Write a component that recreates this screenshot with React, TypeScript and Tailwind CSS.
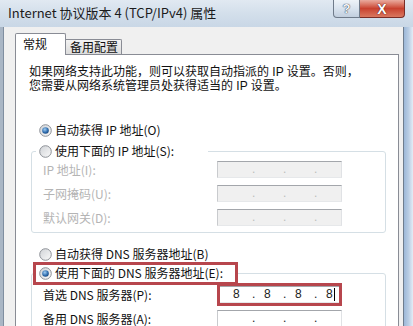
import React from 'react';

const cjk = "font-['Noto_Sans_CJK_SC','Noto_Sans',sans-serif]";

const Radio = ({ checked }: { checked?: boolean }) => (
  <svg width="13" height="13" viewBox="0 0 13 13" className="shrink-0">
    <defs>
      <linearGradient id="radioFill" x1="0" y1="0" x2="1" y2="1">
        <stop offset="0" stopColor="#cfd2d6" />
        <stop offset="1" stopColor="#fbfbfb" />
      </linearGradient>
      <radialGradient id="radioDot" cx="0.4" cy="0.35" r="0.75">
        <stop offset="0" stopColor="#9fcdf3" />
        <stop offset="0.6" stopColor="#2f6cad" />
        <stop offset="1" stopColor="#173f70" />
      </radialGradient>
    </defs>
    <circle cx="6.5" cy="6.5" r="5.8" fill="url(#radioFill)" stroke="#8d9197" strokeWidth="1" />
    {checked && <circle cx="6.5" cy="6.5" r="3.3" fill="url(#radioDot)" />}
  </svg>
);

const RadioRow = ({ checked, label }: { checked?: boolean; label: string }) => (
  <div className="flex h-[16px] items-center gap-[3px] text-[12px] leading-[16px] text-[#111]">
    <Radio checked={checked} />
    <span className="whitespace-nowrap">{label}</span>
  </div>
);

interface IpFieldProps {
  value?: string[];
  disabled?: boolean;
  cursor?: boolean;
}

const IpField = ({ value, disabled, cursor }: IpFieldProps) => (
  <div
    className={`flex h-[17px] w-[125px] shrink-0 items-center overflow-hidden border border-t-[#a3a6ab] border-l-[#c9cbce] border-r-[#e0e2e5] border-b-[#e6e8ea] pl-[15px] font-['Liberation_Sans',sans-serif] text-[12px] leading-[15px] ${
      disabled ? 'bg-[#f0f0f0] text-[#bcbcbc]' : 'bg-white text-[#222]'
    }`}
  >
    {[0, 1, 2, 3].map((i) => (
      <div key={i} className={`flex shrink-0 ${i < 3 ? 'w-[31px]' : ''}`}>
        <span className={i < 3 ? 'w-[19px]' : ''}>{value?.[i] ?? ''}</span>
        {i < 3 && <span>.</span>}
        {i === 3 && cursor && <span className="ml-[1px] mt-[1px] h-[13px] w-px bg-black" />}
      </div>
    ))}
  </div>
);

const FieldRow = ({ label, disabled, children }: { label: string; disabled?: boolean; children: React.ReactNode }) => (
  <div className="flex items-center">
    <span
      className={`w-[174px] whitespace-nowrap text-[12px] leading-[16px] ${disabled ? 'text-[#b4b4b4]' : 'text-[#111]'}`}
    >
      {label}
    </span>
    {children}
  </div>
);

const RedFrame = ({ className }: { className: string }) => (
  <span className={`pointer-events-none absolute border-[3px] border-[#b7464d] ${className}`} />
);

export default function App() {
  return (
    <div className={`flex h-[326px] w-[413px] flex-col overflow-hidden bg-[#c4d3e3] ${cjk}`}>
      {/* title bar */}
      <div className="flex h-[27px] shrink-0 items-start justify-between bg-gradient-to-b from-[#e1e9f2] via-[#d3dfeb] to-[#c9d7e6]">
        <div className="whitespace-nowrap pl-[8px] pt-[4px] text-[13px] leading-[18px] text-[#1b1b1b]">
          Internet 协议版本 4 (TCP/IPv4) 属性
        </div>
        <div className="mr-[8px] flex">
          <div className="flex h-[18px] w-[27px] items-center justify-center rounded-bl-[4px] border border-t-0 border-[#6f7b8a] bg-gradient-to-b from-[#eef3f8] via-[#d9e3ee] to-[#c2cfde] font-['Liberation_Sans',sans-serif] text-[13px] font-bold leading-none text-[#f4f6f9] [text-shadow:0_0_1px_#2f3a48,0_0_1px_#2f3a48]">
            ?
          </div>
          <div className="flex h-[18px] w-[45px] items-center justify-center rounded-br-[4px] border border-l-0 border-t-0 border-[#7a2d26] bg-gradient-to-b from-[#e9aa9e] via-[#c8412f] to-[#d9775f] font-['Liberation_Sans',sans-serif] text-[14px] font-bold leading-none text-white [text-shadow:0_0_1px_#5a1a14,0_0_1px_#5a1a14]">
            X
          </div>
        </div>
      </div>

      <div className="flex flex-1">
        <div className="w-[4px] border-r border-[#7f8ea0] bg-[#a9b6c5]" />

        <div className="flex flex-1 flex-col bg-[#f0f0f0] pl-[11px] pr-[4px] pt-[6px]">
          {/* tabs */}
          <div className="relative z-10 -mb-px flex items-end">
            <div className="h-[22px] w-[51px] rounded-t-[2px] border border-b-0 border-[#898c95] bg-white pl-[7px] pt-[2px] text-[12px] leading-[16px] text-[#111]">
              常规
            </div>
            <div className="mb-px h-[15px] w-[56px] rounded-tr-[2px] border border-b-0 border-l-0 border-[#898c95] bg-gradient-to-b from-[#f3f3f3] to-[#dcdcdc] pl-[4px] text-[12px] leading-[14px] text-[#111]">
              备用配置
            </div>
          </div>

          {/* panel */}
          <div className="min-h-[300px] shrink-0 border border-[#898c95] bg-white pl-[13px] pr-[12px] pt-[10px]">
            <p className="whitespace-nowrap font-['Liberation_Sans','Noto_Sans_CJK_SC',sans-serif] text-[12px] leading-[14px] text-[#111]">
              如果网络支持此功能，则可以获取自动指派的 IP 设置。否则，
              <br />
              您需要从网络系统管理员处获得适当的 IP 设置。
            </p>

            <div className="ml-[10px] mt-[29px]">
              <RadioRow checked label="自动获得 IP 地址(O)" />
            </div>

            <fieldset className="ml-[2px] mt-[5px] rounded-[3px] border border-[#d5dfe5] p-0 pb-[6px]">
              <legend className="ml-[4px] w-[172px] bg-white pl-[3px]">
                <RadioRow label="使用下面的 IP 地址(S):" />
              </legend>
              <div className="mt-[2px] flex flex-col gap-[7px] pl-[11px]">
                <FieldRow label="IP 地址(I):" disabled>
                  <IpField disabled />
                </FieldRow>
                <FieldRow label="子网掩码(U):" disabled>
                  <IpField disabled />
                </FieldRow>
                <FieldRow label="默认网关(D):" disabled>
                  <IpField disabled />
                </FieldRow>
              </div>
            </fieldset>

            <div className="ml-[10px] mt-[13px]">
              <RadioRow label="自动获得 DNS 服务器地址(B)" />
            </div>

            <fieldset className="ml-[2px] mt-[3px] rounded-[3px] border border-[#d5dfe5] p-0 pb-[6px]">
              <legend className="relative ml-[4px] w-[202px] bg-white pl-[3px]">
                <RadioRow checked label="使用下面的 DNS 服务器地址(E):" />
                <RedFrame className="-bottom-[4px] -left-[3px] -top-[3px] right-0" />
              </legend>
              <div className="mt-[5px] flex flex-col gap-[7px] pl-[11px]">
                <FieldRow label="首选 DNS 服务器(P):">
                  <div className="relative">
                    <IpField value={['8', '8', '8', '8']} cursor />
                    <RedFrame className="-bottom-[3px] -top-[3px] left-0 right-0" />
                  </div>
                </FieldRow>
                <FieldRow label="备用 DNS 服务器(A):">
                  <IpField />
                </FieldRow>
              </div>
            </fieldset>
          </div>
        </div>

        <div className="w-[10px] border-l border-[#6f7d8e] bg-gradient-to-r from-[#9db8d8] via-[#b9cde4] to-[#e4ecf5]" />
      </div>
    </div>
  );
}
